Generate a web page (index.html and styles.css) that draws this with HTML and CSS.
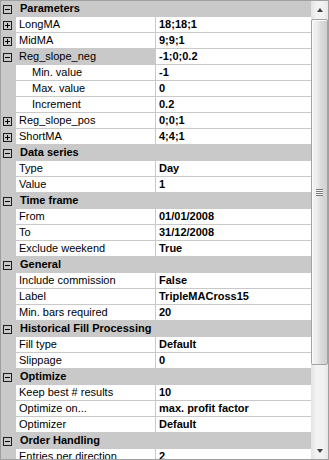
FILE: index.html
```html
<!DOCTYPE html>
<html>
<head>
<meta charset="utf-8">
<link rel="stylesheet" href="styles.css">
</head>
<body>
<div class="pg">
  <div class="grid">
    <div class="cat"><span class="gut"><i class="exp minus"></i></span><span class="ctext">Parameters</span></div>
    <div class="row"><span class="gut"><i class="exp plus"></i></span><span class="lab">LongMA</span><span class="val">18;18;1</span></div>
    <div class="row"><span class="gut"><i class="exp plus"></i></span><span class="lab">MidMA</span><span class="val">9;9;1</span></div>
    <div class="row sel"><span class="gut"><i class="exp minus"></i></span><span class="lab">Reg_slope_neg</span><span class="val">-1;0;0.2</span></div>
    <div class="row"><span class="gut"></span><span class="lab sub">Min. value</span><span class="val">-1</span></div>
    <div class="row"><span class="gut"></span><span class="lab sub">Max. value</span><span class="val">0</span></div>
    <div class="row"><span class="gut"></span><span class="lab sub">Increment</span><span class="val">0.2</span></div>
    <div class="row"><span class="gut"><i class="exp plus"></i></span><span class="lab">Reg_slope_pos</span><span class="val">0;0;1</span></div>
    <div class="row"><span class="gut"><i class="exp plus"></i></span><span class="lab">ShortMA</span><span class="val">4;4;1</span></div>
    <div class="cat"><span class="gut"><i class="exp minus"></i></span><span class="ctext">Data series</span></div>
    <div class="row"><span class="gut"></span><span class="lab">Type</span><span class="val">Day</span></div>
    <div class="row"><span class="gut"></span><span class="lab">Value</span><span class="val">1</span></div>
    <div class="cat"><span class="gut"><i class="exp minus"></i></span><span class="ctext">Time frame</span></div>
    <div class="row"><span class="gut"></span><span class="lab">From</span><span class="val">01/01/2008</span></div>
    <div class="row"><span class="gut"></span><span class="lab">To</span><span class="val">31/12/2008</span></div>
    <div class="row"><span class="gut"></span><span class="lab">Exclude weekend</span><span class="val">True</span></div>
    <div class="cat"><span class="gut"><i class="exp minus"></i></span><span class="ctext">General</span></div>
    <div class="row"><span class="gut"></span><span class="lab">Include commission</span><span class="val">False</span></div>
    <div class="row"><span class="gut"></span><span class="lab">Label</span><span class="val">TripleMACross15</span></div>
    <div class="row"><span class="gut"></span><span class="lab">Min. bars required</span><span class="val">20</span></div>
    <div class="cat"><span class="gut"><i class="exp minus"></i></span><span class="ctext">Historical Fill Processing</span></div>
    <div class="row"><span class="gut"></span><span class="lab">Fill type</span><span class="val">Default</span></div>
    <div class="row"><span class="gut"></span><span class="lab">Slippage</span><span class="val">0</span></div>
    <div class="cat"><span class="gut"><i class="exp minus"></i></span><span class="ctext">Optimize</span></div>
    <div class="row"><span class="gut"></span><span class="lab">Keep best # results</span><span class="val">10</span></div>
    <div class="row"><span class="gut"></span><span class="lab">Optimize on...</span><span class="val">max. profit factor</span></div>
    <div class="row"><span class="gut"></span><span class="lab">Optimizer</span><span class="val">Default</span></div>
    <div class="cat"><span class="gut"><i class="exp minus"></i></span><span class="ctext">Order Handling</span></div>
    <div class="row"><span class="gut"></span><span class="lab">Entries per direction</span><span class="val">2</span></div>
  </div>
  <div class="sb">
    <div class="btn"><i class="arr up"></i></div>
    <div class="track">
      <div class="thumb"><span class="grip"></span></div>
    </div>
    <div class="btn"><i class="arr down"></i></div>
  </div>
</div>
</body>
</html>
```

FILE: styles.css
```css
html, body {
  margin: 0;
  padding: 0;
  background: #ffffff;
}
.pg {
  width: 329px;
  height: 460px;
  box-sizing: border-box;
  border: 1px solid #a0a0a0;
  display: flex;
  overflow: hidden;
  font-family: "Liberation Sans", Arial, sans-serif;
  font-size: 11px;
  color: #000;
  background: #c9c9c9;
}
.grid {
  width: 310px;
  display: flex;
  flex-direction: column;
  flex: none;
}
.cat, .row {
  display: flex;
  height: 16px;
  flex: none;
  box-sizing: border-box;
  line-height: 15px;
  white-space: nowrap;
}
.cat {
  background: #c9c9c9;
}
.gut {
  width: 15px;
  flex: none;
  display: flex;
  align-items: center;
  background: #c9c9c9;
}
.exp {
  display: block;
  width: 9px;
  height: 9px;
  margin-left: 2px;
  margin-top: 1px;
  box-sizing: border-box;
  border: 1px solid #1e1e1e;
  position: relative;
}
.exp::before {
  content: "";
  position: absolute;
  left: 1px;
  top: 3px;
  width: 5px;
  height: 1px;
  background: #000;
}
.plus::after {
  content: "";
  position: absolute;
  left: 3px;
  top: 1px;
  width: 1px;
  height: 5px;
  background: #000;
}
.ctext {
  font-weight: bold;
  padding-left: 4px;
}
.lab {
  width: 140px;
  flex: none;
  box-sizing: border-box;
  padding-left: 3px;
  background: #fff;
  border-right: 1px solid #c9c9c9;
  border-bottom: 1px solid #c9c9c9;
  overflow: hidden;
}
.lab.sub {
  padding-left: 16px;
}
.sel .lab {
  background: #c9c9c9;
}
.val {
  flex: 1;
  padding-left: 3px;
  font-weight: bold;
  background: #fff;
  border-bottom: 1px solid #c9c9c9;
  overflow: hidden;
}
.sb {
  width: 17px;
  flex: none;
  display: flex;
  flex-direction: column;
  background: linear-gradient(to right, #e3e3e3, #f2f2f2 30%, #f2f2f2 70%, #e6e6e6);
}
.btn {
  height: 17px;
  flex: none;
  display: flex;
  align-items: center;
  justify-content: center;
}
.arr {
  display: block;
  width: 0;
  height: 0;
  border-left: 3.5px solid transparent;
  border-right: 3.5px solid transparent;
}
.up {
  border-bottom: 4px solid #404040;
}
.down {
  border-top: 4px solid #404040;
}
.track {
  flex: 1;
  padding-top: 1px;
  display: flex;
  flex-direction: column;
}
.thumb {
  height: 346px;
  margin: 0 0 0 0;
  box-sizing: border-box;
  border: 1px solid #a3a3a3;
  border-radius: 2px;
  background: linear-gradient(to right, #f4f4f4 0%, #ececec 35%, #dadada 60%, #d0d0d0 100%);
  box-shadow: inset 1px 1px 0 #fcfcfc;
  display: flex;
  align-items: center;
  justify-content: center;
}
.grip {
  display: block;
  width: 7px;
  height: 7px;
  background: repeating-linear-gradient(to bottom, #7a7a7a 0 1px, #f4f4f4 1px 2px);
}
```
